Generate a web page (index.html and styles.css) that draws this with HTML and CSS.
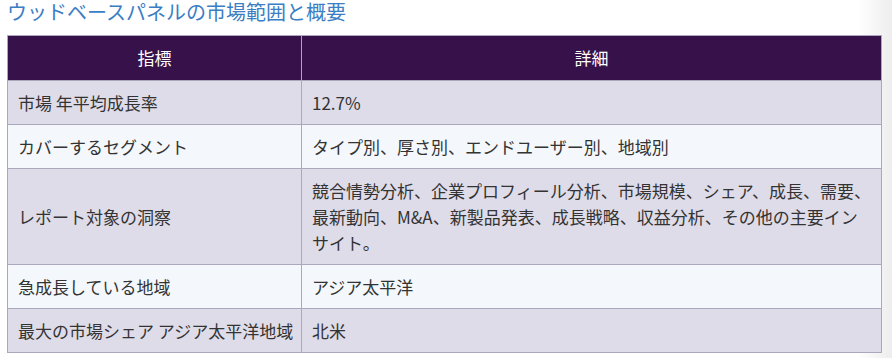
FILE: index.html
```html
<!DOCTYPE html>
<html lang="ja">
<head>
<meta charset="utf-8">
<title>ウッドベースパネルの市場範囲と概要</title>
<link rel="stylesheet" href="styles.css">
</head>
<body>
<div class="page">
  <h2 class="title">ウッドベースパネルの市場範囲と概要</h2>
  <table class="summary">
    <thead>
      <tr>
        <th class="col-key">指標</th>
        <th class="col-val">詳細</th>
      </tr>
    </thead>
    <tbody>
      <tr class="odd">
        <td class="key">市場 年平均成長率</td>
        <td>12.7%</td>
      </tr>
      <tr class="even">
        <td class="key">カバーするセグメント</td>
        <td>タイプ別、厚さ別、エンドユーザー別、地域別</td>
      </tr>
      <tr class="odd">
        <td class="key">レポート対象の洞察</td>
        <td>競合情勢分析、企業プロフィール分析、市場規模、シェア、成長、需要、最新動向、M&amp;A、新製品発表、成長戦略、収益分析、その他の主要インサイト。</td>
      </tr>
      <tr class="even">
        <td class="key">急成長している地域</td>
        <td>アジア太平洋</td>
      </tr>
      <tr class="odd">
        <td class="key">最大の市場シェア アジア太平洋地域</td>
        <td>北米</td>
      </tr>
    </tbody>
  </table>
</div>
</body>
</html>
```

FILE: styles.css
```css
html, body {
  margin: 0;
  padding: 0;
}

body {
  background: linear-gradient(to right, #ffffff 0, #ffffff calc(100% - 34px), #ededed 100%);
  min-height: 358px;
  font-family: "Noto Sans CJK JP", "Noto Sans", "Liberation Sans", sans-serif;
  color: #333333;
}

.page {
  padding: 0 10px 0 7px;
}

.title {
  margin: 0 0 11px 0;
  font-size: 20px;
  line-height: 24px;
  font-weight: normal;
  color: #3b7ec4;
}

.summary {
  width: 875px;
  border-collapse: collapse;
  border: 1px solid #aba8be;
  font-size: 17px;
  line-height: 26px;
  table-layout: fixed;
}

.summary th {
  background: #37124a;
  color: #ffffff;
  font-weight: normal;
  text-align: center;
  padding: 9px 10px;
  border: 1px solid #aba8be;
}

.col-key {
  width: 273px;
}

.summary td {
  padding: 9px 10px 8px 10px;
  border: 1px solid #aba8be;
  vertical-align: middle;
  text-align: left;
}

.summary td.key {
  white-space: nowrap;
}

.odd td {
  background: #dfdce9;
}

.even td {
  background: #f4f8fc;
}
```
